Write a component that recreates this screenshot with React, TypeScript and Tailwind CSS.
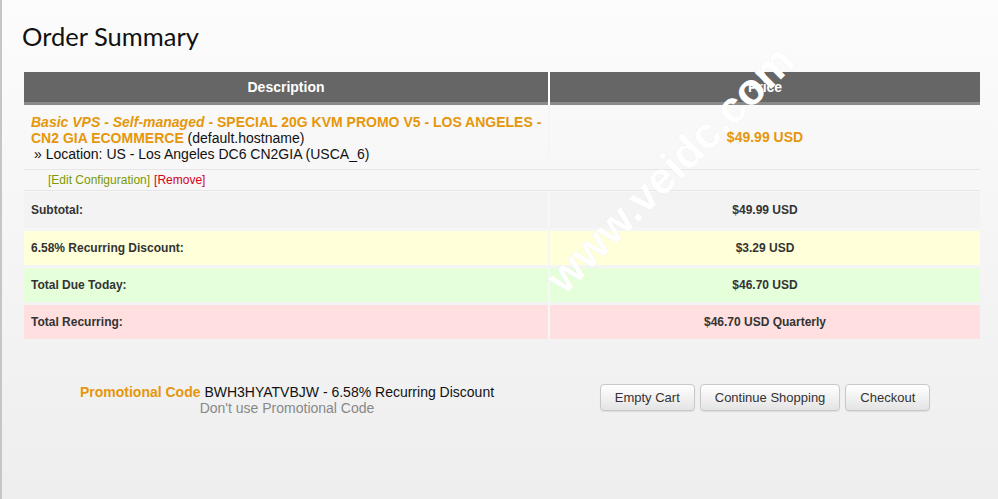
export default function App() {
  const totals = [
    { label: "Subtotal:", value: "$49.99 USD", bg: "bg-[#f3f3f3]", h: "h-[36px]" },
    { label: "6.58% Recurring Discount:", value: "$3.29 USD", bg: "bg-[#ffffd9]", h: "h-[34px]" },
    { label: "Total Due Today:", value: "$46.70 USD", bg: "bg-[#e5ffdb]", h: "h-[34px]" },
    { label: "Total Recurring:", value: "$46.70 USD Quarterly", bg: "bg-[#ffdfdf]", h: "h-[34px]" },
  ];

  return (
    <div
      className="relative w-full h-[499px] overflow-hidden border-l-2 border-[#c6c6c6] bg-gradient-to-b from-[#fcfcfc] to-[#eeeeee] text-[#333]"
      style={{ fontFamily: '"Liberation Sans", Arial, sans-serif' }}
    >
      {/* Title */}
      <h1
        className="ml-[20px] pt-[18px] text-[25.5px] leading-[36px] text-[#111]"
        style={{ fontFamily: 'Lato, "Open Sans", sans-serif' }}
      >
        Order Summary
      </h1>

      <div className="ml-[22px] mt-[18px] w-[956px]">
        {/* Header */}
        <div className="flex h-[33px] text-[14px] font-bold text-white">
          <div className="w-[524px] flex items-center justify-center bg-[#666] border-b-[3px] border-[#8a8a8a]">
            Description
          </div>
          <div className="w-[2px] bg-white" />
          <div className="flex-1 flex items-center justify-center bg-[#666] border-b-[3px] border-[#8a8a8a]">
            Price
          </div>
        </div>

        {/* Item row */}
        <div className="flex border-b border-[#e6e6e6]">
          <div className="w-[524px] pl-[7px] pr-[4px] pt-[9px] pb-[7px] text-[14px] leading-[16px]">
            <div className="text-[#111]">
              <span className="font-bold text-[#e5970c]">
                <i>Basic VPS - Self-managed</i> - SPECIAL 20G KVM PROMO V5 - LOS ANGELES - CN2 GIA ECOMMERCE
              </span>{" "}
              (default.hostname)
            </div>
            <div className="pl-[3px] text-[#111]">» Location: US - Los Angeles DC6 CN2GIA (USCA_6)</div>
          </div>
          <div className="w-[2px] bg-[#f6f6f6]" />
          <div className="flex-1 flex items-center justify-center text-[14px] font-bold text-[#e5970c]">
            $49.99 USD
          </div>
        </div>

        {/* Edit row */}
        <div className="flex h-[21px] border-b border-[#e6e6e6]">
          <div className="w-[524px] pl-[24px] flex items-center text-[12px]">
            <span className="text-[#7a9a01]">[Edit Configuration]</span>
            <span className="ml-[4px] text-[#d60018]">[Remove]</span>
          </div>
          <div className="w-[2px] bg-[#f6f6f6]" />
          <div className="flex-1" />
        </div>

        {/* Totals */}
        <div className="mt-[1px] flex flex-col gap-[3px]">
          {totals.map((t) => (
            <div key={t.label} className={`flex ${t.h} text-[12px] font-bold text-[#333]`}>
              <div className={`w-[524px] pl-[7px] flex items-center ${t.bg}`}>{t.label}</div>
              <div className="w-[2px] bg-[#f7f7f7]" />
              <div className={`flex-1 flex items-center justify-center ${t.bg}`}>{t.value}</div>
            </div>
          ))}
        </div>

        {/* Promo + actions */}
        <div className="mt-[45px] flex items-start">
          <div className="w-[526px] text-center text-[14px] leading-[16px]">
            <div className="text-[#111]">
              <span className="font-bold text-[#e5970c]">Promotional Code</span> BWH3HYATVBJW - 6.58% Recurring Discount
            </div>
            <div className="text-[#888]">Don't use Promotional Code</div>
          </div>
          <div className="flex-1 flex justify-center gap-[5px]">
            {["Empty Cart", "Continue Shopping", "Checkout"].map((b) => (
              <button
                key={b}
                className="h-[27px] px-[14px] text-[13px] text-[#333] rounded-[4px] border border-[#c8c8c8] bg-gradient-to-b from-white to-[#e4e4e4] shadow-[0_1px_1px_rgba(0,0,0,0.08)]"
              >
                {b}
              </button>
            ))}
          </div>
        </div>
      </div>

      {/* Watermark */}
      <div
        className="absolute left-[498px] top-[147px] w-[340px] text-center text-[44px] font-bold leading-[44px] text-white -rotate-45 pointer-events-none"
        style={{ fontFamily: '"Liberation Sans", Arial, sans-serif', textShadow: "0 0 1px rgba(0,0,0,0.08)" }}
      >
        www.veidc.com
      </div>
    </div>
  );
}
